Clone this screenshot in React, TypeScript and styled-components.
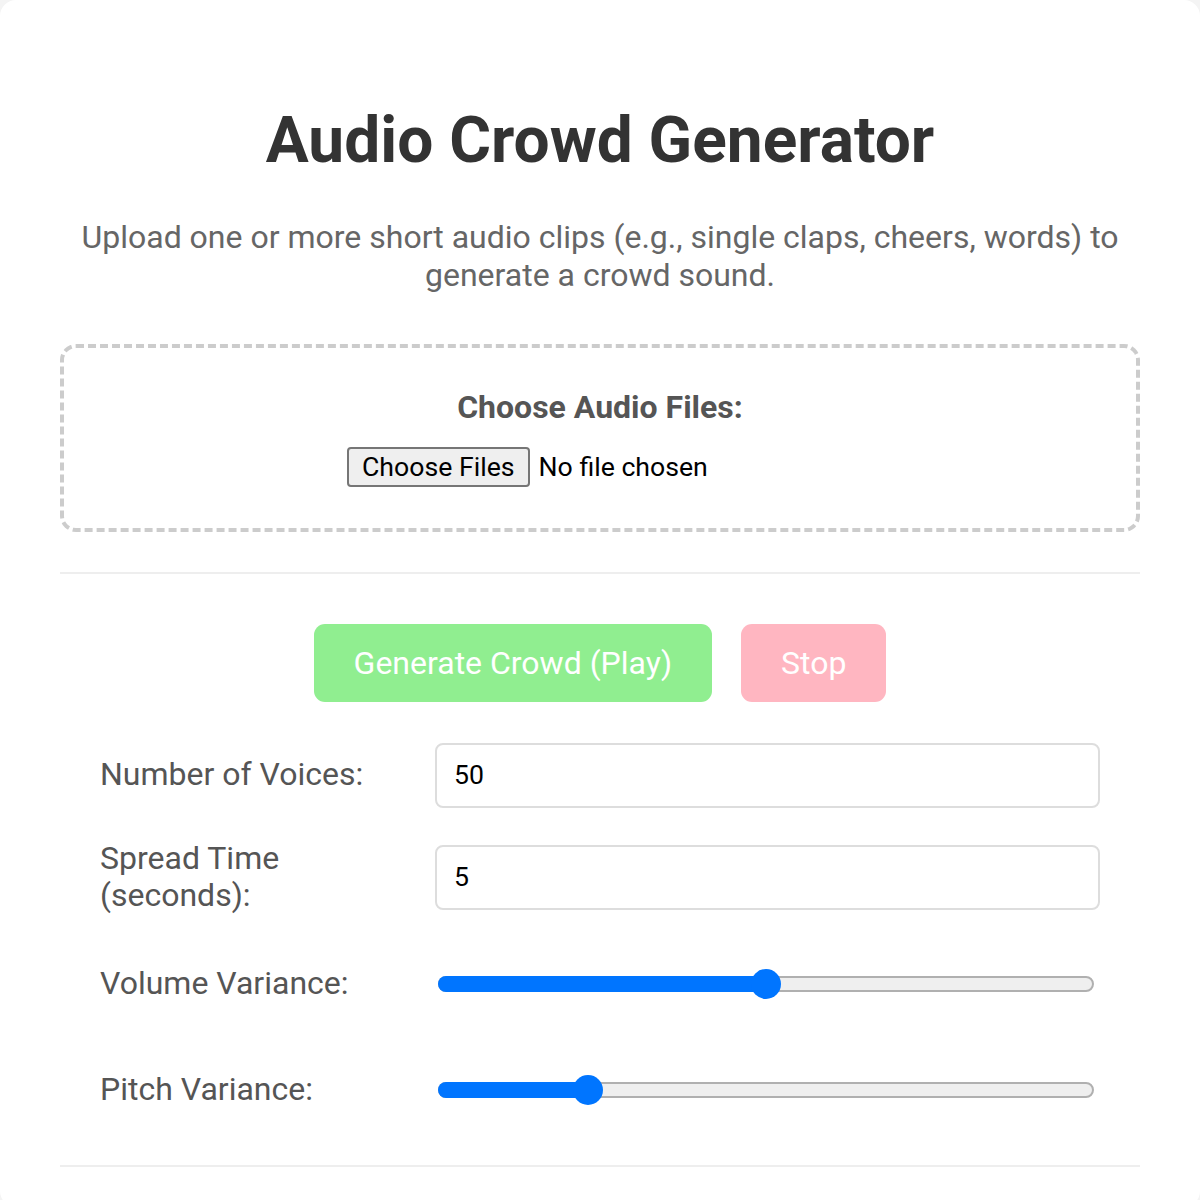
import React from "react";
import styled, { createGlobalStyle } from "styled-components";

const GlobalStyle = createGlobalStyle`
  html, body {
    margin: 0;
    padding: 0;
    background: #f4f4f4;
  }
  body {
    font-family: Roboto, "Liberation Sans", Arial, sans-serif;
  }
  * { box-sizing: border-box; }
`;

const Container = styled.div`
  width: 1200px;
  margin: 0 auto;
  background: #ffffff;
  border-radius: 16px;
  padding: 0 60px 40px;
  color: #333;
`;

const Title = styled.h1`
  margin: 0;
  padding-top: 103px;
  font-size: 64px;
  font-weight: 700;
  line-height: 75px;
  text-align: center;
  color: #333;
`;

const Subtitle = styled.p`
  margin: 41px 0 50px;
  font-size: 32px;
  line-height: 37.5px;
  text-align: center;
  color: #666;
`;

const DropZone = styled.div`
  border: 4px dashed #cccccc;
  border-radius: 16px;
  padding: 41px 20px;
  text-align: center;
`;

const DropLabel = styled.label`
  display: block;
  font-size: 32px;
  line-height: 37.5px;
  font-weight: 700;
  color: #555;
  margin-bottom: 20px;
`;

const FileField = styled.div`
  display: inline-flex;
  align-items: center;
  width: 506px;
  height: 40px;
  text-align: left;
`;

const FileButton = styled.button`
  height: 40px;
  padding: 0 13px;
  border: 2px solid #767676;
  border-radius: 4px;
  background: #efefef;
  color: #000;
  font-family: Roboto, "Liberation Sans", Arial, sans-serif;
  font-size: 26.67px;
  margin-right: 9px;
`;

const FileText = styled.span`
  font-size: 26.67px;
  color: #000;
`;

const Divider = styled.hr<{ $top: number; $bottom: number }>`
  border: none;
  border-top: 2px solid #eeeeee;
  margin: ${(p) => `${p.$top}px 0 ${p.$bottom}px`};
`;

const ButtonRow = styled.div`
  display: flex;
  justify-content: center;
  gap: 29px;
  margin-bottom: 41px;
`;

const ActionButton = styled.button<{ $bg: string }>`
  height: 78px;
  padding: 0 40px;
  border: none;
  border-radius: 11px;
  background: ${(p) => p.$bg};
  color: #ffffff;
  font-family: Roboto, "Liberation Sans", Arial, sans-serif;
  font-size: 32px;
`;

const Form = styled.div`
  display: flex;
  flex-direction: column;
  gap: 32px;
  padding: 0 40px;
`;

const Row = styled.div<{ $height?: number }>`
  display: flex;
  align-items: center;
  gap: 20px;
  min-height: ${(p) => (p.$height ? `${p.$height}px` : "auto")};
`;

const FieldLabel = styled.label`
  flex: 0 0 315px;
  font-size: 32px;
  line-height: 37.5px;
  color: #555;
`;

const TextInput = styled.input`
  flex: 1;
  height: 65px;
  padding: 0 17px;
  border: 2px solid #dddddd;
  border-radius: 8px;
  font-family: Roboto, "Liberation Sans", Arial, sans-serif;
  font-size: 26.67px;
  color: #000;
  outline: none;
`;

const SliderWrap = styled.div`
  flex: 1;
  position: relative;
  height: 30px;
  margin: 0 6px 0 3px;
`;

const Track = styled.div`
  position: absolute;
  left: 0;
  right: 0;
  top: 7px;
  height: 16px;
  border-radius: 8px;
  background: #efefef;
  border: 2px solid #b0b0b0;
`;

const Fill = styled.div`
  position: absolute;
  left: 0;
  top: 7px;
  height: 16px;
  border-radius: 8px 0 0 8px;
  background: #0075ff;
`;

const Thumb = styled.div`
  position: absolute;
  top: 0;
  width: 30px;
  height: 30px;
  margin-left: -15px;
  border-radius: 50%;
  background: #0075ff;
`;

function Slider({ value }: { value: number }) {
  const pct = `calc(15px + (100% - 30px) * ${value})`;
  return (
    <SliderWrap>
      <Track />
      <Fill style={{ width: pct }} />
      <Thumb style={{ left: pct }} />
    </SliderWrap>
  );
}

export default function App() {
  return (
    <>
      <GlobalStyle />
      <Container>
        <Title>Audio Crowd Generator</Title>
        <Subtitle>
          Upload one or more short audio clips (e.g., single claps, cheers, words) to generate a crowd sound.
        </Subtitle>
        <DropZone>
          <DropLabel>Choose Audio Files:</DropLabel>
          <FileField>
            <FileButton type="button">Choose Files</FileButton>
            <FileText>No file chosen</FileText>
          </FileField>
        </DropZone>
        <Divider $top={40} $bottom={50} />
        <ButtonRow>
          <ActionButton $bg="#90ee90">Generate Crowd (Play)</ActionButton>
          <ActionButton $bg="#ffb6c1">Stop</ActionButton>
        </ButtonRow>
        <Form>
          <Row>
            <FieldLabel>Number of Voices:</FieldLabel>
            <TextInput defaultValue="50" />
          </Row>
          <Row>
            <FieldLabel>Spread Time (seconds):</FieldLabel>
            <TextInput defaultValue="5" />
          </Row>
          <Row $height={74}>
            <FieldLabel>Volume Variance:</FieldLabel>
            <Slider value={0.5} />
          </Row>
          <Row $height={74}>
            <FieldLabel>Pitch Variance:</FieldLabel>
            <Slider value={0.216} />
          </Row>
        </Form>
        <Divider $top={38} $bottom={0} />
      </Container>
    </>
  );
}
